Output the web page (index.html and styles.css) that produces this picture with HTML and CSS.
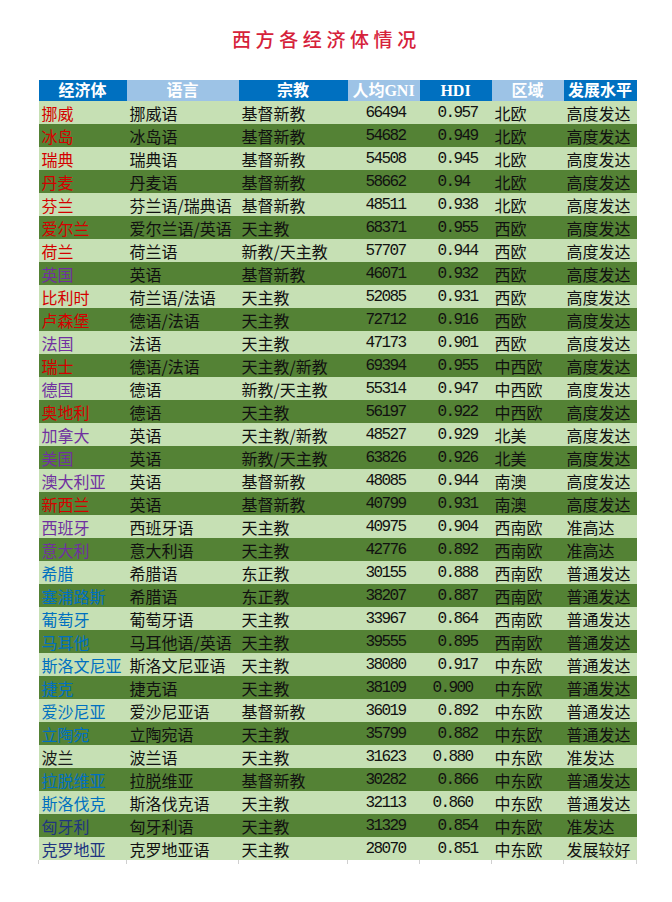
FILE: index.html
```html
<!DOCTYPE html>
<html lang="zh-CN">
<head>
<meta charset="utf-8">
<title>西方各经济体情况</title>
<link rel="stylesheet" href="styles.css">
</head>
<body>
<div class="page">
  <h1 class="title">西方各经济体情况</h1>
  <table class="sheet">
    <colgroup>
      <col class="c1"><col class="c2"><col class="c3"><col class="c4"><col class="c5"><col class="c6"><col class="c7">
    </colgroup>
    <thead>
      <tr>
        <th class="hd">经济体</th>
        <th class="hl">语言</th>
        <th class="hd">宗教</th>
        <th class="hl">人均GNI</th>
        <th class="hd">HDI</th>
        <th class="hl">区域</th>
        <th class="hd">发展水平</th>
      </tr>
    </thead>
    <tbody>
      <tr class="lt"><td class="nm r">挪威</td><td>挪威语</td><td>基督新教</td><td class="num">66494</td><td class="hdi">0.957</td><td>北欧</td><td>高度发达</td></tr>
      <tr class="dk"><td class="nm r">冰岛</td><td>冰岛语</td><td>基督新教</td><td class="num">54682</td><td class="hdi">0.949</td><td>北欧</td><td>高度发达</td></tr>
      <tr class="lt"><td class="nm r">瑞典</td><td>瑞典语</td><td>基督新教</td><td class="num">54508</td><td class="hdi">0.945</td><td>北欧</td><td>高度发达</td></tr>
      <tr class="dk"><td class="nm r">丹麦</td><td>丹麦语</td><td>基督新教</td><td class="num">58662</td><td class="hdi">0.94</td><td>北欧</td><td>高度发达</td></tr>
      <tr class="lt"><td class="nm r">芬兰</td><td>芬兰语/瑞典语</td><td>基督新教</td><td class="num">48511</td><td class="hdi">0.938</td><td>北欧</td><td>高度发达</td></tr>
      <tr class="dk"><td class="nm r">爱尔兰</td><td>爱尔兰语/英语</td><td>天主教</td><td class="num">68371</td><td class="hdi">0.955</td><td>西欧</td><td>高度发达</td></tr>
      <tr class="lt"><td class="nm r">荷兰</td><td>荷兰语</td><td>新教/天主教</td><td class="num">57707</td><td class="hdi">0.944</td><td>西欧</td><td>高度发达</td></tr>
      <tr class="dk"><td class="nm p">英国</td><td>英语</td><td>基督新教</td><td class="num">46071</td><td class="hdi">0.932</td><td>西欧</td><td>高度发达</td></tr>
      <tr class="lt"><td class="nm r">比利时</td><td>荷兰语/法语</td><td>天主教</td><td class="num">52085</td><td class="hdi">0.931</td><td>西欧</td><td>高度发达</td></tr>
      <tr class="dk"><td class="nm r">卢森堡</td><td>德语/法语</td><td>天主教</td><td class="num">72712</td><td class="hdi">0.916</td><td>西欧</td><td>高度发达</td></tr>
      <tr class="lt"><td class="nm p">法国</td><td>法语</td><td>天主教</td><td class="num">47173</td><td class="hdi">0.901</td><td>西欧</td><td>高度发达</td></tr>
      <tr class="dk"><td class="nm r">瑞士</td><td>德语/法语</td><td>天主教/新教</td><td class="num">69394</td><td class="hdi">0.955</td><td>中西欧</td><td>高度发达</td></tr>
      <tr class="lt"><td class="nm p">德国</td><td>德语</td><td>新教/天主教</td><td class="num">55314</td><td class="hdi">0.947</td><td>中西欧</td><td>高度发达</td></tr>
      <tr class="dk"><td class="nm r">奥地利</td><td>德语</td><td>天主教</td><td class="num">56197</td><td class="hdi">0.922</td><td>中西欧</td><td>高度发达</td></tr>
      <tr class="lt"><td class="nm p">加拿大</td><td>英语</td><td>天主教/新教</td><td class="num">48527</td><td class="hdi">0.929</td><td>北美</td><td>高度发达</td></tr>
      <tr class="dk"><td class="nm p">美国</td><td>英语</td><td>新教/天主教</td><td class="num">63826</td><td class="hdi">0.926</td><td>北美</td><td>高度发达</td></tr>
      <tr class="lt"><td class="nm p">澳大利亚</td><td>英语</td><td>基督新教</td><td class="num">48085</td><td class="hdi">0.944</td><td>南澳</td><td>高度发达</td></tr>
      <tr class="dk"><td class="nm r">新西兰</td><td>英语</td><td>基督新教</td><td class="num">40799</td><td class="hdi">0.931</td><td>南澳</td><td>高度发达</td></tr>
      <tr class="lt"><td class="nm p">西班牙</td><td>西班牙语</td><td>天主教</td><td class="num">40975</td><td class="hdi">0.904</td><td>西南欧</td><td>准高达</td></tr>
      <tr class="dk"><td class="nm p">意大利</td><td>意大利语</td><td>天主教</td><td class="num">42776</td><td class="hdi">0.892</td><td>西南欧</td><td>准高达</td></tr>
      <tr class="lt"><td class="nm b">希腊</td><td>希腊语</td><td>东正教</td><td class="num">30155</td><td class="hdi">0.888</td><td>西南欧</td><td>普通发达</td></tr>
      <tr class="dk"><td class="nm b">塞浦路斯</td><td>希腊语</td><td>东正教</td><td class="num">38207</td><td class="hdi">0.887</td><td>西南欧</td><td>普通发达</td></tr>
      <tr class="lt"><td class="nm b">葡萄牙</td><td>葡萄牙语</td><td>天主教</td><td class="num">33967</td><td class="hdi">0.864</td><td>西南欧</td><td>普通发达</td></tr>
      <tr class="dk"><td class="nm b">马耳他</td><td>马耳他语/英语</td><td>天主教</td><td class="num">39555</td><td class="hdi">0.895</td><td>西南欧</td><td>普通发达</td></tr>
      <tr class="lt"><td class="nm b">斯洛文尼亚</td><td>斯洛文尼亚语</td><td>天主教</td><td class="num">38080</td><td class="hdi">0.917</td><td>中东欧</td><td>普通发达</td></tr>
      <tr class="dk"><td class="nm b">捷克</td><td>捷克语</td><td>天主教</td><td class="num">38109</td><td class="hdi txt">0.900</td><td>中东欧</td><td>普通发达</td></tr>
      <tr class="lt"><td class="nm b">爱沙尼亚</td><td>爱沙尼亚语</td><td>基督新教</td><td class="num">36019</td><td class="hdi">0.892</td><td>中东欧</td><td>普通发达</td></tr>
      <tr class="dk"><td class="nm b">立陶宛</td><td>立陶宛语</td><td>天主教</td><td class="num">35799</td><td class="hdi">0.882</td><td>中东欧</td><td>普通发达</td></tr>
      <tr class="lt"><td class="nm k">波兰</td><td>波兰语</td><td>天主教</td><td class="num">31623</td><td class="hdi txt">0.880</td><td>中东欧</td><td>准发达</td></tr>
      <tr class="dk"><td class="nm b">拉脱维亚</td><td>拉脱维亚</td><td>基督新教</td><td class="num">30282</td><td class="hdi">0.866</td><td>中东欧</td><td>普通发达</td></tr>
      <tr class="lt"><td class="nm b">斯洛伐克</td><td>斯洛伐克语</td><td>天主教</td><td class="num">32113</td><td class="hdi txt">0.860</td><td>中东欧</td><td>普通发达</td></tr>
      <tr class="dk"><td class="nm n">匈牙利</td><td>匈牙利语</td><td>天主教</td><td class="num">31329</td><td class="hdi">0.854</td><td>中东欧</td><td>准发达</td></tr>
      <tr class="lt"><td class="nm n">克罗地亚</td><td>克罗地亚语</td><td>天主教</td><td class="num">28070</td><td class="hdi">0.851</td><td>中东欧</td><td>发展较好</td></tr>
      <tr class="ticks"><td></td><td></td><td></td><td></td><td></td><td></td><td></td></tr>
    </tbody>
  </table>
</div>
</body>
</html>
```

FILE: styles.css
```css
html, body {
  margin: 0;
  padding: 0;
  background: #ffffff;
}

.page {
  padding: 27px 0 0 38px;
  display: flex;
  flex-direction: column;
  align-items: flex-start;
}

.title {
  margin: 0 0 29px 194px;
  font-family: "Noto Sans CJK SC", sans-serif;
  font-weight: 500;
  font-size: 19px;
  line-height: 24px;
  letter-spacing: 4.6px;
  color: #d6223a;
}

.sheet {
  border-collapse: collapse;
  table-layout: fixed;
  width: 598px;
}

.c1 { width: 88px; }
.c2 { width: 112px; }
.c3 { width: 109px; }
.c4 { width: 72px; }
.c5 { width: 72px; }
.c6 { width: 72px; }
.c7 { width: 73px; }

.sheet th {
  height: 21px;
  padding: 0;
  font-family: "Liberation Serif", "Noto Sans CJK SC", serif;
  font-weight: 700;
  font-size: 16px;
  line-height: 21px;
  color: #ffffff;
  text-align: center;
  white-space: nowrap;
}

.hd { background: #0070c0; }
.hl { background: #9dc3e6; }

.sheet td {
  height: 23px;
  padding: 1px 0 0 3px;
  box-sizing: border-box;
  font-family: "Noto Sans CJK SC", sans-serif;
  font-size: 16px;
  line-height: 22px;
  color: #111111;
  white-space: nowrap;
  overflow: hidden;
}

.lt { background: #c6e0b4; }
.dk { background: #548235; }

.sheet td.num,
.sheet td.hdi {
  font-family: "Liberation Mono", monospace;
  font-size: 16px;
  letter-spacing: -1.6px;
  padding-left: 18px;
}

.sheet td.hdi.txt { padding-left: 13px; }

.r { color: #d40000 !important; }
.p { color: #7030a0 !important; }
.b { color: #0070c0 !important; }
.k { color: #1a1a1a !important; }
.n { color: #203480 !important; }

.sheet tr.ticks td {
  height: 4px;
  padding: 0;
  line-height: 0;
  background: transparent;
  border-left: 1px solid #d0d0d0;
}

.sheet tr.ticks td:last-child {
  border-right: 1px solid #d0d0d0;
}
```
